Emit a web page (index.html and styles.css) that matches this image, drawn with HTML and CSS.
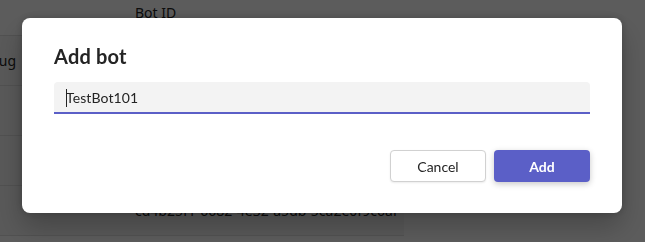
FILE: index.html
```html
<!DOCTYPE html>
<html>

<head>
    <title>Add bot</title>
    <meta charset="UTF-8">
    <link rel="stylesheet" href="styles.css">
</head>

<body>
    <table class="bot-table">
        <thead>
            <tr>
                <th class="col-name"></th>
                <th>Bot ID</th>
            </tr>
        </thead>
        <tbody>
            <tr>
                <td class="col-name">Debug</td>
                <td>8a1f03c2-77d4-4b10-9e25-1c4f8d2a6b90</td>
            </tr>
            <tr>
                <td class="col-name"></td>
                <td>f27c6e11-0b3a-49d8-8c7e-5d92a1e3b4c7</td>
            </tr>
            <tr>
                <td class="col-name"></td>
                <td>2e9d4a70-3f1b-4c6e-b8a2-7d05c9e1f3a4</td>
            </tr>
            <tr>
                <td class="col-name"></td>
                <td>cd4b25f1-6682-4e32-a5db-5ca2e0f9c6af</td>
            </tr>
        </tbody>
    </table>

    <div class="overlay">
        <div class="dialog">
            <h2 class="dialog-title">Add bot</h2>
            <div class="field">
                <input type="text" class="field-input" value="TestBot101" />
                <span class="caret"></span>
            </div>
            <div class="dialog-actions">
                <button class="btn btn-secondary">Cancel</button>
                <button class="btn btn-primary">Add</button>
            </div>
        </div>
    </div>
</body>

</html>
```

FILE: styles.css
```css
body {
    margin: 0;
    background-color: #fff;
    font-family: "Segoe UI", "Noto Sans", sans-serif;
    color: #242424;
    overflow: hidden;
}

/* page behind the dialog */
.bot-table {
    border-collapse: collapse;
    margin-left: -40px;
    font-size: 14px;
}

.bot-table th {
    height: 35px;
    text-align: left;
    font-weight: normal;
    vertical-align: top;
    padding: 3px 0 0 0;
    box-sizing: border-box;
    border-bottom: 1px solid #e0e0e0;
}

.bot-table td {
    height: 50px;
    padding: 0;
    box-sizing: border-box;
    border-bottom: 1px solid #e0e0e0;
    background-color: #f6f6f6;
}

.bot-table .col-name {
    width: 175px;
    padding-left: 12px;
}

/* dialog */
.overlay {
    position: fixed;
    inset: 0;
    background-color: rgba(0, 0, 0, 0.64);
    display: flex;
    align-items: flex-start;
    padding: 18px 0 0 22px;
}

.dialog {
    width: 600px;
    box-sizing: border-box;
    padding: 24px 32px 31px 32px;
    background-color: #fff;
    border-radius: 8px;
    box-shadow: 0 0 8px rgba(0, 0, 0, 0.2), 0 14px 28px rgba(0, 0, 0, 0.24);
}

.dialog-title {
    margin: 0;
    font-family: Lato, "Noto Sans", sans-serif;
    font-size: 20px;
    font-weight: bold;
    line-height: 28px;
    letter-spacing: 0.2px;
}

.field {
    position: relative;
    margin-top: 12px;
}

.field-input {
    display: block;
    width: 100%;
    height: 32px;
    box-sizing: border-box;
    padding: 0 12px;
    font-family: Lato, "Noto Sans", sans-serif;
    font-size: 14px;
    letter-spacing: 0.1px;
    color: #242424;
    background-color: #f3f3f3;
    border: none;
    border-bottom: 2px solid #5b5fc7;
    border-radius: 4px 4px 0 0;
    outline: none;
}

.caret {
    position: absolute;
    left: 12px;
    top: 7px;
    width: 1px;
    height: 18px;
    background-color: #242424;
}

.dialog-actions {
    display: flex;
    justify-content: flex-end;
    gap: 8px;
    margin-top: 36px;
}

.btn {
    width: 96px;
    height: 32px;
    font-family: Lato, "Noto Sans", sans-serif;
    font-size: 14px;
    border-radius: 4px;
    cursor: pointer;
}

.btn-secondary {
    background-color: #fff;
    color: #242424;
    border: 1px solid #d1d1d1;
    box-shadow: 0 1px 2px rgba(0, 0, 0, 0.08);
}

.btn-primary {
    background-color: #5b5fc7;
    color: #fff;
    border: none;
    font-weight: bold;
    box-shadow: 0 2px 6px rgba(0, 0, 0, 0.22);
}
```
